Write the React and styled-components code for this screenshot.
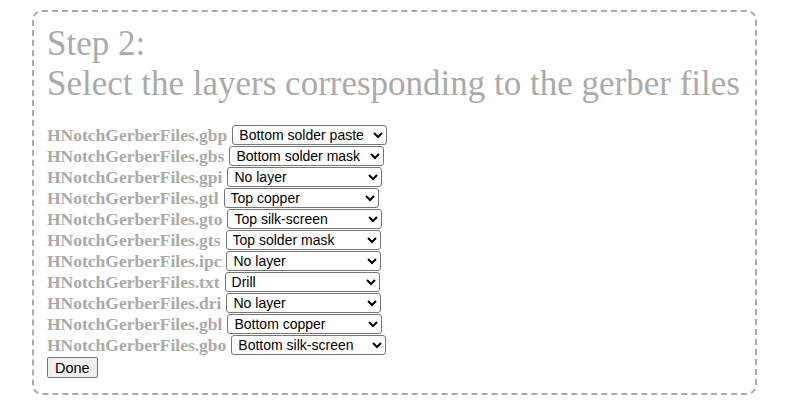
import React from 'react'
import styled, { createGlobalStyle } from 'styled-components'

const GlobalStyle = createGlobalStyle`
  body {
    margin: 0;
    background: #fff;
    font-family: "Liberation Serif", "Times New Roman", serif;
  }
`

const Panel = styled.div`
  margin: 10px 38px 0 32px;
  padding: 12px 12px 15px 13px;
  border: 2px dashed #aaa;
  border-radius: 10px;
`

const Title = styled.h2`
  margin: 0 0 21px;
  font-size: 35px;
  font-weight: normal;
  line-height: 40px;
  color: #aaa;
`

const FileList = styled.div`
  display: flex;
  flex-direction: column;
  align-items: flex-start;
  gap: 1px;
`

const FileRow = styled.div`
  display: flex;
  align-items: center;
  gap: 5px;
  height: 20px;
`

const FileName = styled.span`
  font-size: 17.5px;
  font-weight: bold;
  color: #aaa;
`

const LayerSelect = styled.select`
  font-family: "Liberation Sans", Arial, sans-serif;
  font-size: 14px;
  height: 20px;
  width: 155px;
  padding: 0 0 0 2px;
  border: 1px solid #767676;
  border-radius: 3px;
  background: #fff;
  color: #000;
`

const DoneButton = styled.button`
  margin-top: 1px;
  font-family: "Liberation Sans", Arial, sans-serif;
  font-size: 14.5px;
  height: 21px;
  padding: 0 7px;
  border: 1px solid #767676;
  border-radius: 2px;
  background: #efefef;
  color: #000;
`

const layers = [
  'No layer',
  'Top copper',
  'Top silk-screen',
  'Top solder mask',
  'Top solder paste',
  'Bottom copper',
  'Bottom silk-screen',
  'Bottom solder mask',
  'Bottom solder paste',
  'Drill',
  'Outline',
]

const files = [
  ['gbp', 'Bottom solder paste'],
  ['gbs', 'Bottom solder mask'],
  ['gpi', 'No layer'],
  ['gtl', 'Top copper'],
  ['gto', 'Top silk-screen'],
  ['gts', 'Top solder mask'],
  ['ipc', 'No layer'],
  ['txt', 'Drill'],
  ['dri', 'No layer'],
  ['gbl', 'Bottom copper'],
  ['gbo', 'Bottom silk-screen'],
]

const App = () => {
  return (
    <>
      <GlobalStyle />
      <Panel>
        <Title>
          Step 2:
          <br />
          Select the layers corresponding to the gerber files
        </Title>
        <FileList>
          {files.map(([ext, layer]) => (
            <FileRow key={ext}>
              <FileName>HNotchGerberFiles.{ext}</FileName>
              <LayerSelect defaultValue={layer}>
                {layers.map((l) => (
                  <option key={l}>{l}</option>
                ))}
              </LayerSelect>
            </FileRow>
          ))}
          <DoneButton>Done</DoneButton>
        </FileList>
      </Panel>
    </>
  )
}

export default App
